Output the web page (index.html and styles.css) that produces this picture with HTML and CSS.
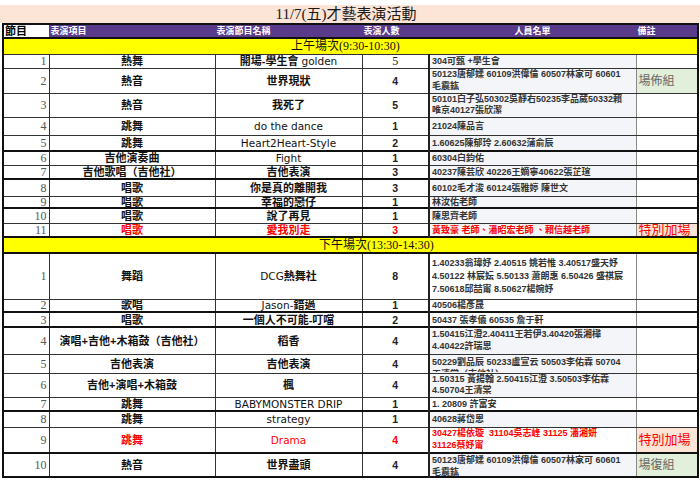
FILE: index.html
```html
<!DOCTYPE html>
<html lang="zh-Hant">
<head>
<meta charset="utf-8">
<title>11/7(五)才藝表演活動</title>
<link rel="stylesheet" href="styles.css">
</head>
<body>
<div class="title">11/7(五)才藝表演活動</div>
<table class="sheet">
  <colgroup>
    <col class="c-no"><col class="c-type"><col class="c-name"><col class="c-cnt"><col class="c-list"><col class="c-note">
  </colgroup>
  <tr class="head h14">
    <td class="hno">節目</td><td>表演項目</td><td>表演節目名稱</td><td>表演人數</td><td class="hc">人員名單</td><td>備註</td>
  </tr>
  <tr class="sec h16"><td colspan="6" class="sec-am">上午場次(9:30-10:30)</td></tr>

  <tr class="h14"><td class="no">1</td><td class="type">熱舞</td><td class="name">開場-學生會 <span class="lat">golden</span></td><td class="cnt serif">5</td><td class="list">304可甄 +學生會</td><td class="note"></td></tr>
  <tr class="h25"><td class="no">2</td><td class="type">熱音</td><td class="name">世界現狀</td><td class="cnt">4</td><td class="list two">50123唐郁媃 60109洪偉倫 60507林家可 60601<br>毛震鈜</td><td class="note green">場佈組</td></tr>
  <tr class="h24"><td class="no">3</td><td class="type">熱音</td><td class="name">我死了</td><td class="cnt">5</td><td class="list two">50101白子弘50302吳靜右50235李品葳50332賴<br>唯京40127張欣潔</td><td class="note"></td></tr>
  <tr class="h18"><td class="no">4</td><td class="type">跳舞</td><td class="name"><span class="lat">do the dance</span></td><td class="cnt">1</td><td class="list">21024陳品言</td><td class="note"></td></tr>
  <tr class="h16"><td class="no">5</td><td class="type">跳舞</td><td class="name"><span class="lat">Heart2Heart-Style</span></td><td class="cnt">2</td><td class="list">1.60625陳郁玲 2.60632蒲俞辰</td><td class="note"></td></tr>
  <tr class="h14 tk"><td class="no">6</td><td class="type">吉他演奏曲</td><td class="name"><span class="lat">Fight</span></td><td class="cnt">1</td><td class="list">60304白鈞佑</td><td class="note"></td></tr>
  <tr class="h14"><td class="no">7</td><td class="type">吉他歌唱（吉他社）</td><td class="name">吉他表演</td><td class="cnt">3</td><td class="list">40237陳芸欣 40226王嫡寧40622張芷瑄</td><td class="note"></td></tr>
  <tr class="h17 tk"><td class="no">8</td><td class="type">唱歌</td><td class="name">你是真的離開我</td><td class="cnt">3</td><td class="list">60102毛才浚 60124張雅婷 陳世文</td><td class="note"></td></tr>
  <tr class="h12"><td class="no">9</td><td class="type">唱歌</td><td class="name">幸福的戀仔</td><td class="cnt">1</td><td class="list">林汝佑老師</td><td class="note"></td></tr>
  <tr class="h15 tk"><td class="no">10</td><td class="type">唱歌</td><td class="name">說了再見</td><td class="cnt">1</td><td class="list">陳思齊老師</td><td class="note"></td></tr>
  <tr class="h14 red"><td class="no">11</td><td class="type">唱歌</td><td class="name">愛我別走</td><td class="cnt">3</td><td class="list">黃致豪 老師、潘昭宏老師 、賴信越老師</td><td class="note peach">特別加場</td></tr>

  <tr class="sec h16 tk"><td colspan="6" class="sec-pm">下午場次(13:30-14:30)</td></tr>

  <tr class="h46 tk"><td class="no">1</td><td class="type">舞蹈</td><td class="name"><span class="lat">DCG</span>熱舞社</td><td class="cnt">8</td><td class="list plain three">1.40233翁瑋妤 2.40515 姚若惟 3.40517盛天妤<br>4.50122 林宸妘 5.50133 蕭朗惠 6.50426 盛祺宸<br>7.50618邱喆甯 8.50627楊婉妤</td><td class="note"></td></tr>
  <tr class="h13"><td class="no">2</td><td class="type">歌唱</td><td class="name"><span class="lat">Jason-</span>錯過</td><td class="cnt">1</td><td class="list plain">40506楊彥晟</td><td class="note"></td></tr>
  <tr class="h15 tk"><td class="no">3</td><td class="type">唱歌</td><td class="name">一個人不可能-叮噹</td><td class="cnt">2</td><td class="list plain">50437 張孝儀 60535 詹于軒</td><td class="note"></td></tr>
  <tr class="h27 tk"><td class="no">4</td><td class="type">演唱+吉他+木箱鼓（吉他社）</td><td class="name">稻香</td><td class="cnt">4</td><td class="list two">1.50415江澄2.40411王若伊3.40420張湘樺<br>4.40422許瑞恩</td><td class="note"></td></tr>
  <tr class="h19"><td class="no">5</td><td class="type">吉他表演</td><td class="name">吉他表演</td><td class="cnt">4</td><td class="list top"><div class="clip c17">50229劉品辰 50233盧宣云 50503李佑霖 50704<br>王清棠（吉他社）</div></td><td class="note"></td></tr>
  <tr class="h24"><td class="no">6</td><td class="type">吉他+演唱+木箱鼓</td><td class="name">楓</td><td class="cnt">4</td><td class="list two">1.50315 黃揚翰 2.50415江澄 3.50503李佑霖<br>4.50704王清棠</td><td class="note"></td></tr>
  <tr class="h14"><td class="no">7</td><td class="type">跳舞</td><td class="name"><span class="lat">BABYMONSTER DRIP</span></td><td class="cnt">1</td><td class="list plain">1. 20809 許富安</td><td class="note"></td></tr>
  <tr class="h16 tk"><td class="no">8</td><td class="type">跳舞</td><td class="name"><span class="lat">strategy</span></td><td class="cnt">1</td><td class="list">40628蔣岱恩</td><td class="note"></td></tr>
  <tr class="h26 red"><td class="no">9</td><td class="type">跳舞</td><td class="name"><span class="lat">Drama</span></td><td class="cnt">4</td><td class="list plain two">30427楊依璇&nbsp; 31104吳志峰 31125 潘湘妍<br>31126蔡妤甯</td><td class="note peach">特別加場</td></tr>
  <tr class="h24 tk"><td class="no">10</td><td class="type">熱音</td><td class="name">世界盡頭</td><td class="cnt">4</td><td class="list top"><div class="clip c22">50123唐郁媃 60109洪偉倫 60507林家可 60601<br>毛震鈜</div></td><td class="note green">場復組</td></tr>
</table>
</body>
</html>
```

FILE: styles.css
```css
* { box-sizing: border-box; }

body {
  margin: 0;
  background: #ffffff;
  font-family: "Liberation Sans", "Noto Sans CJK TC", sans-serif;
  color: #111;
}

.title {
  margin-top: 5px;
  height: 18px;
  background: #fce4d6;
  font-family: "Liberation Serif", "Noto Sans CJK TC", serif;
  font-size: 15px;
  line-height: 19px;
  text-align: center;
  padding-right: 8px;
  color: #1a1a1a;
}

.sheet {
  border-collapse: collapse;
  table-layout: fixed;
  width: 697px;
  margin-left: 2px;
  border: 2px solid #111;
}

.c-no { width: 46px; }
.c-type { width: 166px; }
.c-name { width: 147px; }
.c-cnt { width: 67px; }
.c-list { width: 207px; }
.c-note { width: 62px; }

.h12 { height: 12px; }
.h13 { height: 13px; }
.h14 { height: 14px; }
.h15 { height: 15px; }
.h16 { height: 16px; }
.h17 { height: 17px; }
.h18 { height: 18px; }
.h19 { height: 19px; }
.h24 { height: 24px; }
.h25 { height: 25px; }
.h26 { height: 26px; }
.h27 { height: 27px; }
.h46 { height: 46px; }

td {
  border: 1px solid #333;
  padding: 0 2px;
  overflow: hidden;
  white-space: nowrap;
  font-size: 11px;
  line-height: 10px;
  vertical-align: middle;
}

.tk td { border-top: 2px solid #111; }

/* header */
.head td {
  background: #5a3a8a;
  color: #fff;
  font-size: 9px;
  font-weight: bold;
  border-left: 1px solid #5a3a8a;
  border-right: 1px solid #5a3a8a;
  border-bottom: 2px solid #111;
  padding: 0 1px;
}
.head td.hno {
  background: #fff;
  color: #000;
  font-size: 11px;
  padding-left: 1px;
}
.head td.hc { text-align: center; }

/* section bands */
.sec td {
  background: #ffff00;
  font-family: "Liberation Serif", "Noto Sans CJK TC", serif;
  font-size: 12px;
  color: #111;
}
.sec-am { padding-left: 287px; }
.sec-pm { padding-left: 315px; }

/* body cells */
td.no {
  text-align: right;
  font-family: "Liberation Serif", serif;
  font-size: 12px;
  color: #555;
  padding-right: 2px;
}
td.type, td.name {
  text-align: center;
  font-weight: bold;
  font-size: 11px;
  color: #111;
}
.lat {
  font-family: "DejaVu Sans", sans-serif;
  font-weight: normal;
  font-size: 10.5px;
  line-height: 8px;
}
td.cnt {
  text-align: center;
  font-weight: bold;
  font-size: 10.5px;
  color: #222;
}
td.cnt.serif {
  font-family: "Liberation Serif", serif;
  font-weight: normal;
  font-size: 12px;
}
td.list {
  background: #f4f5f8;
  border-left: 2px solid #222;
  border-right: 1px solid #888;
  font-size: 9px;
  font-weight: bold;
  color: #333;
  padding-left: 2px;
}
td.list.plain { background: #fff; }
td.list.two { line-height: 11.5px; }
td.list.three { line-height: 13px; }
td.list.top { vertical-align: top; line-height: 12px; }
.clip { overflow: hidden; }
.c17 { height: 17px; padding-top: 1px; }
.c22 { height: 22px; }

td.note { background: #fff; }
td.note.green {
  background: #e2efda;
  color: #666;
  font-size: 12px;
  font-weight: normal;
}
td.note.peach {
  background: #fce4d6;
  color: #ff0000;
  font-size: 13px;
  line-height: 12px;
  font-family: "Liberation Serif", "Noto Sans CJK TC", serif;
}

tr.red td.type, tr.red td.name, tr.red td.cnt, tr.red td.list { color: #ff0000; }
```
